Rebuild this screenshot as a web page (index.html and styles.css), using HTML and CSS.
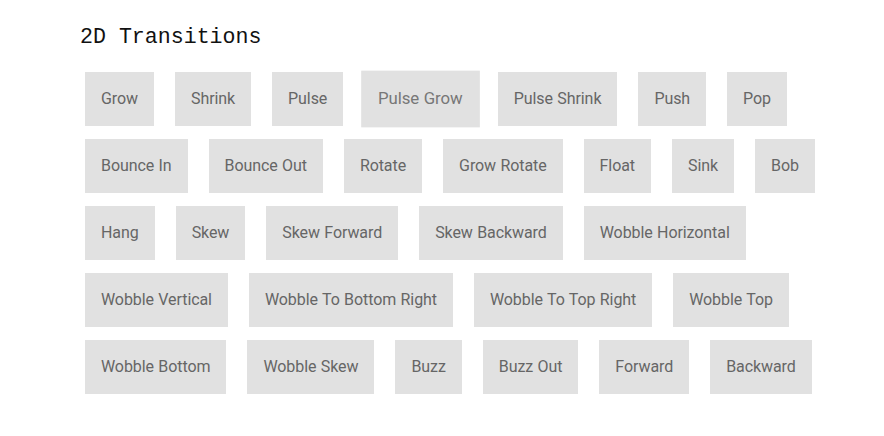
FILE: index.html
```html
<!DOCTYPE html>
<html>
	<head>
		<meta charset="utf-8">
		<title>2D Transitions</title>
		<link rel="stylesheet" href="styles.css">
	</head>
	<body>
		<div class="demo">
			<h2 class="title">2D Transitions</h2>
			<div class="buttons">
				<a class="button">Grow</a>
				<a class="button">Shrink</a>
				<a class="button">Pulse</a>
				<a class="button pulse-grow">Pulse Grow</a>
				<a class="button">Pulse Shrink</a>
				<a class="button">Push</a>
				<a class="button">Pop</a>
				<a class="button">Bounce In</a>
				<a class="button">Bounce Out</a>
				<a class="button">Rotate</a>
				<a class="button">Grow Rotate</a>
				<a class="button">Float</a>
				<a class="button">Sink</a>
				<a class="button">Bob</a>
				<a class="button">Hang</a>
				<a class="button">Skew</a>
				<a class="button">Skew Forward</a>
				<a class="button">Skew Backward</a>
				<a class="button">Wobble Horizontal</a>
				<a class="button">Wobble Vertical</a>
				<a class="button">Wobble To Bottom Right</a>
				<a class="button">Wobble To Top Right</a>
				<a class="button">Wobble Top</a>
				<a class="button">Wobble Bottom</a>
				<a class="button">Wobble Skew</a>
				<a class="button">Buzz</a>
				<a class="button">Buzz Out</a>
				<a class="button">Forward</a>
				<a class="button">Backward</a>
			</div>
		</div>
	</body>
</html>
```

FILE: styles.css
```css
*{
	margin: 0;
	padding: 0;
	box-sizing: border-box;
}
body{
	background: #fff;
	font-family: Roboto, "Liberation Sans", sans-serif;
}
.demo{
	padding: 22px 0 0 80px;
	width: 860px;
}
.title{
	font-family: "Liberation Mono", monospace;
	font-size: 21.6px;
	font-weight: normal;
	line-height: 30px;
	height: 30px;
	color: #111;
	margin-bottom: 20px;
}
.buttons{
	display: flex;
	flex-wrap: wrap;
	column-gap: 21px;
	row-gap: 13px;
	padding-left: 5px;
}
.button{
	display: block;
	padding: 16px;
	line-height: 22px;
	font-size: 16px;
	letter-spacing: -0.08px;
	word-spacing: 0.5px;
	color: #666;
	background: #e1e1e1;
	cursor: pointer;
	white-space: nowrap;
}
.pulse-grow{
	transform: scale(1.05);
	color: #777;
}
```
